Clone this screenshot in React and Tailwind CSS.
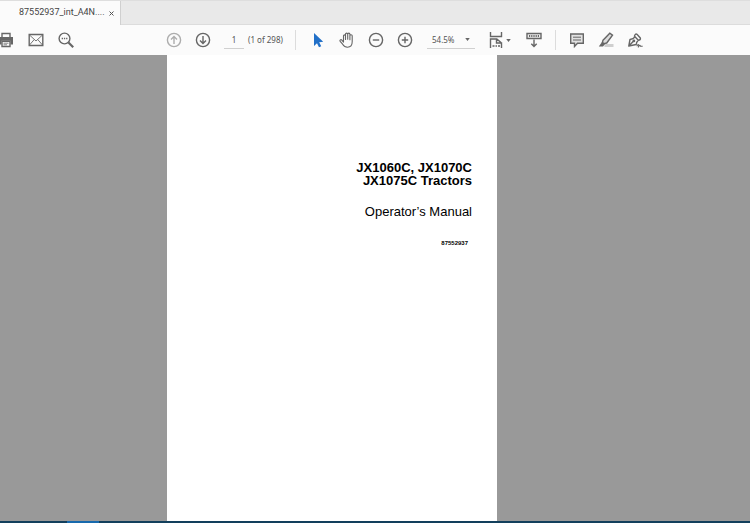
import React, { useState } from 'react';

const Icon = ({ children, className = 'w-4 h-4', viewBox = '0 0 16 16' }) => (
  <svg
    viewBox={viewBox}
    className={`shrink-0 ${className}`}
    fill="none"
    stroke="currentColor"
    strokeWidth="1.4"
    aria-hidden="true"
  >
    {children}
  </svg>
);

const ToolButton = ({ label, children, className = 'w-[29px] text-[#666666]', ...props }) => (
  <button
    type="button"
    aria-label={label}
    className={`flex h-full shrink-0 items-center justify-center ${className}`}
    {...props}
  >
    {children}
  </button>
);

const Caret = ({ className = '' }) => (
  <svg viewBox="0 0 6 4" className={`h-[3px] w-[5px] shrink-0 ${className}`} fill="#666666" aria-hidden="true">
    <path d="M0 0h6L3 4z" />
  </svg>
);

const Toolbar = () => {
  const [page, setPage] = useState('1');
  const [zoom, setZoom] = useState('54.5%');

  return (
    <div className="flex h-[30px] items-center overflow-hidden bg-[#fbfbfb]">
      {/* File actions */}
      <ToolButton label="Print" className="-ml-[9px] w-[30px] text-[#666666]">
        <Icon>
          <path d="M4 5V1.500h8V5" />
          <path d="M1 5h14v7.500h-2.500V8.800h-9v3.700H1z" fill="currentColor" stroke="none" />
          <path d="M4 9.300h8v5.200H4z" />
          <path d="M5.500 11.200h5M5.500 12.800h3.500" strokeWidth="0.8" />
        </Icon>
      </ToolButton>
      <ToolButton label="Send by email" className="w-[30px] text-[#666666]">
        <Icon>
          <path d="M1.200 2.500h13.600v11H1.200z" />
          <path d="M1.500 3 8 9l6.500-6M1.500 13l4.700-5.400M14.500 13 9.800 7.600" strokeWidth="0.9" />
        </Icon>
      </ToolButton>
      <ToolButton label="Find" className="w-[30px] text-[#666666]">
        <Icon>
          <circle cx="6.500" cy="6.500" r="5.400" />
          <path d="m10.500 10.500 4.700 4.700" strokeWidth="2.200" />
          <path d="M3.700 6.500h1.300M5.900 6.500h1.300M8.100 6.500h1.300" />
        </Icon>
      </ToolButton>

      {/* Page navigation */}
      <ToolButton label="Previous page" className="ml-[78px] w-[29px] text-[#adadad]">
        <Icon>
          <circle cx="8" cy="8" r="6.600" />
          <path d="M8 12V4.700M5 7.500l3-3 3 3" />
        </Icon>
      </ToolButton>
      <ToolButton label="Next page">
        <Icon>
          <circle cx="8" cy="8" r="6.600" />
          <path d="M8 4v7.300M5 8.500l3 3 3-3" />
        </Icon>
      </ToolButton>
      <input
        type="text"
        id="page-number"
        aria-label="Page number"
        value={page}
        onChange={(e) => setPage(e.target.value)}
        className="ml-[7px] h-[18px] w-5 shrink-0 border-b border-[#d0d0d0] text-center text-[8px] text-[#555555] outline-none"
      />
      <label
        htmlFor="page-number"
        className="ml-1 flex h-5 w-12 shrink-0 items-center whitespace-nowrap border-r border-[#dcdcdc] text-[8px] text-[#555555]"
      >
        (1 of 298)
      </label>

      {/* Pointer and zoom */}
      <ToolButton label="Select tool" className="ml-[7px] w-[29px] text-[#2170c8]">
        <Icon>
          <path d="M4 1v13l3-2.700 2 4 2.200-1-2-4.100 4-.4z" fill="currentColor" stroke="none" />
        </Icon>
      </ToolButton>
      <ToolButton label="Hand tool">
        <Icon>
          <path
            d="M4.500 9V3.900c0-1.400 2-1.400 2 0V7.500 2.200c0-1.500 2.200-1.500 2.200 0v5V2.200c0-1.500 2.200-1.500 2.200 0v5.600-4c0-1.400 2.300-1.400 2.300 0v6c0 3.500-1.700 5.400-4.700 5.400-2.600 0-3.800-1.300-4.900-3L1.200 9.400c-.8-1.300.7-2.300 1.700-1.300l1.600 2z"
            strokeWidth="1.100"
            strokeLinejoin="round"
          />
        </Icon>
      </ToolButton>
      <ToolButton label="Zoom out">
        <Icon>
          <circle cx="8" cy="8" r="6.600" />
          <path d="M4.800 8h6.400" />
        </Icon>
      </ToolButton>
      <ToolButton label="Zoom in">
        <Icon>
          <circle cx="8" cy="8" r="6.600" />
          <path d="M4.800 8h6.400M8 4.800v6.400" />
        </Icon>
      </ToolButton>
      <div className="relative ml-2 flex h-[18px] w-12 shrink-0 items-center border-b border-[#d0d0d0]">
        <select
          aria-label="Zoom level"
          value={zoom}
          onChange={(e) => setZoom(e.target.value)}
          className="w-full appearance-none pl-[5px] text-[8px] text-[#555555] outline-none"
        >
          <option>50%</option>
          <option>54.5%</option>
          <option>75%</option>
          <option>100%</option>
        </select>
        <Caret className="pointer-events-none absolute right-[5px]" />
      </div>

      {/* Page display */}
      <ToolButton label="Fit page" className="ml-3 w-6 gap-0.5 text-[#666666]">
        <Icon className="h-[18px] w-4" viewBox="0 0 16 18">
          <path d="M2.500 1v4.500h11V1" />
          <path d="M2.500 17V8h6.300l4.200 3.500M8.500 8v4h5v5" />
          <path d="M4.500 15h2M7.500 15h1.500M10 15h2" />
        </Icon>
        <Caret />
      </ToolButton>
      <ToolButton label="Show toolbar below" className="ml-2 w-[29px] text-[#666666]">
        <Icon>
          <path d="M1 1.500h14v5H1z" fill="#eeeeee" />
          <path d="M3 4h10" strokeWidth="2" strokeDasharray="1.200 1" />
          <path d="M8 7.500v7M5.300 11.800 8 14.500l2.700-2.700" />
        </Icon>
      </ToolButton>
      <div className="ml-[7px] h-5 w-px shrink-0 bg-[#dcdcdc]" />

      {/* Annotations */}
      <ToolButton label="Add comment" className="ml-1.5 w-[29px] text-[#666666]">
        <Icon>
          <path d="M1.700 2h12.600v9.300H8.500l-3 3.200v-3.200H1.700z" fill="#e2e2e2" />
          <path d="M4 5.200h8M4 8h8" strokeWidth="1" />
        </Icon>
      </ToolButton>
      <ToolButton label="Highlight text">
        <Icon>
          <path d="M6.500 13.500h9" stroke="#cfcfcf" strokeWidth="3" />
          <path d="m5 8.200 6.800-7 2.700 2L8.700 11l-2.900.6-1.400-1.100z" fill="#dddddd" />
          <path d="m4.200 9.800 2.900 2.300-2.100 2.400H.8z" fill="currentColor" stroke="none" />
        </Icon>
      </ToolButton>
      <ToolButton label="Sign document">
        <Icon>
          <path d="M1.800 14 3 7.500c2.200-.3 3.800-1 5-2.700l3.300 3.400c-1.500 1.300-2 2.700-2.100 4.300zM1.800 14l4.600-4.800" strokeLinejoin="round" />
          <path d="M7.500 4.800C7.300 3.200 8.600 1.500 10 2.300L13.300 6c.7 1.300-.7 2.300-2 2.100" />
          <circle cx="6.900" cy="8.900" r=".7" />
          <path d="M9.800 14.300c1.300-2.500 2-2 1.800 0 1.100-1.500 1.700-1 1.900 0h2.200" strokeWidth="1.100" />
        </Icon>
      </ToolButton>
    </div>
  );
};

const App = () => {
  return (
    <div className="flex min-h-screen flex-col overflow-hidden bg-[#999999] font-['Noto_Sans','Open_Sans',sans-serif]">
      {/* Tabs */}
      <div className="flex h-[25px] shrink-0 border-t border-[#dedede] bg-[#e9e9e9]">
        <div className="flex w-[121px] items-center justify-between border-r border-[#d0d0d0] bg-[#fbfbfb] pl-[19px] pr-1.5">
          <span className="whitespace-nowrap font-[Roboto,sans-serif] text-[9px] text-[#444444]">
            87552937_int_A4N....
          </span>
          <button type="button" aria-label="Close tab" className="text-[#555555]">
            <svg viewBox="0 0 5 5" className="h-[5px] w-[5px]" stroke="currentColor" aria-hidden="true">
              <path d="m.5.5 4 4m0-4-4 4" />
            </svg>
          </button>
        </div>
        <div className="grow border-b border-[#dcdcdc]" />
      </div>

      <Toolbar />

      {/* Document */}
      <main className="flex grow justify-center pr-[86px]">
        <article className="w-[330px] bg-white pr-[25px] pt-[106px] text-right font-['Liberation_Sans',Arial,sans-serif] text-black">
          <h1 className="text-[13px] font-bold leading-[13px]">
            JX1060C, JX1070C
            <br />
            JX1075C Tractors
          </h1>
          <p className="mt-[18px] text-[13px] leading-[14px]">Operator’s Manual</p>
          <p className="mt-5 pr-1 text-[6px] font-bold leading-[8px]">87552937</p>
        </article>
      </main>

      {/* Taskbar edge */}
      <div className="h-0.5 shrink-0 bg-[#123f5c] pl-[67px]">
        <div className="h-full w-8 bg-[#1769ad]" />
      </div>
    </div>
  );
};

export default App;
